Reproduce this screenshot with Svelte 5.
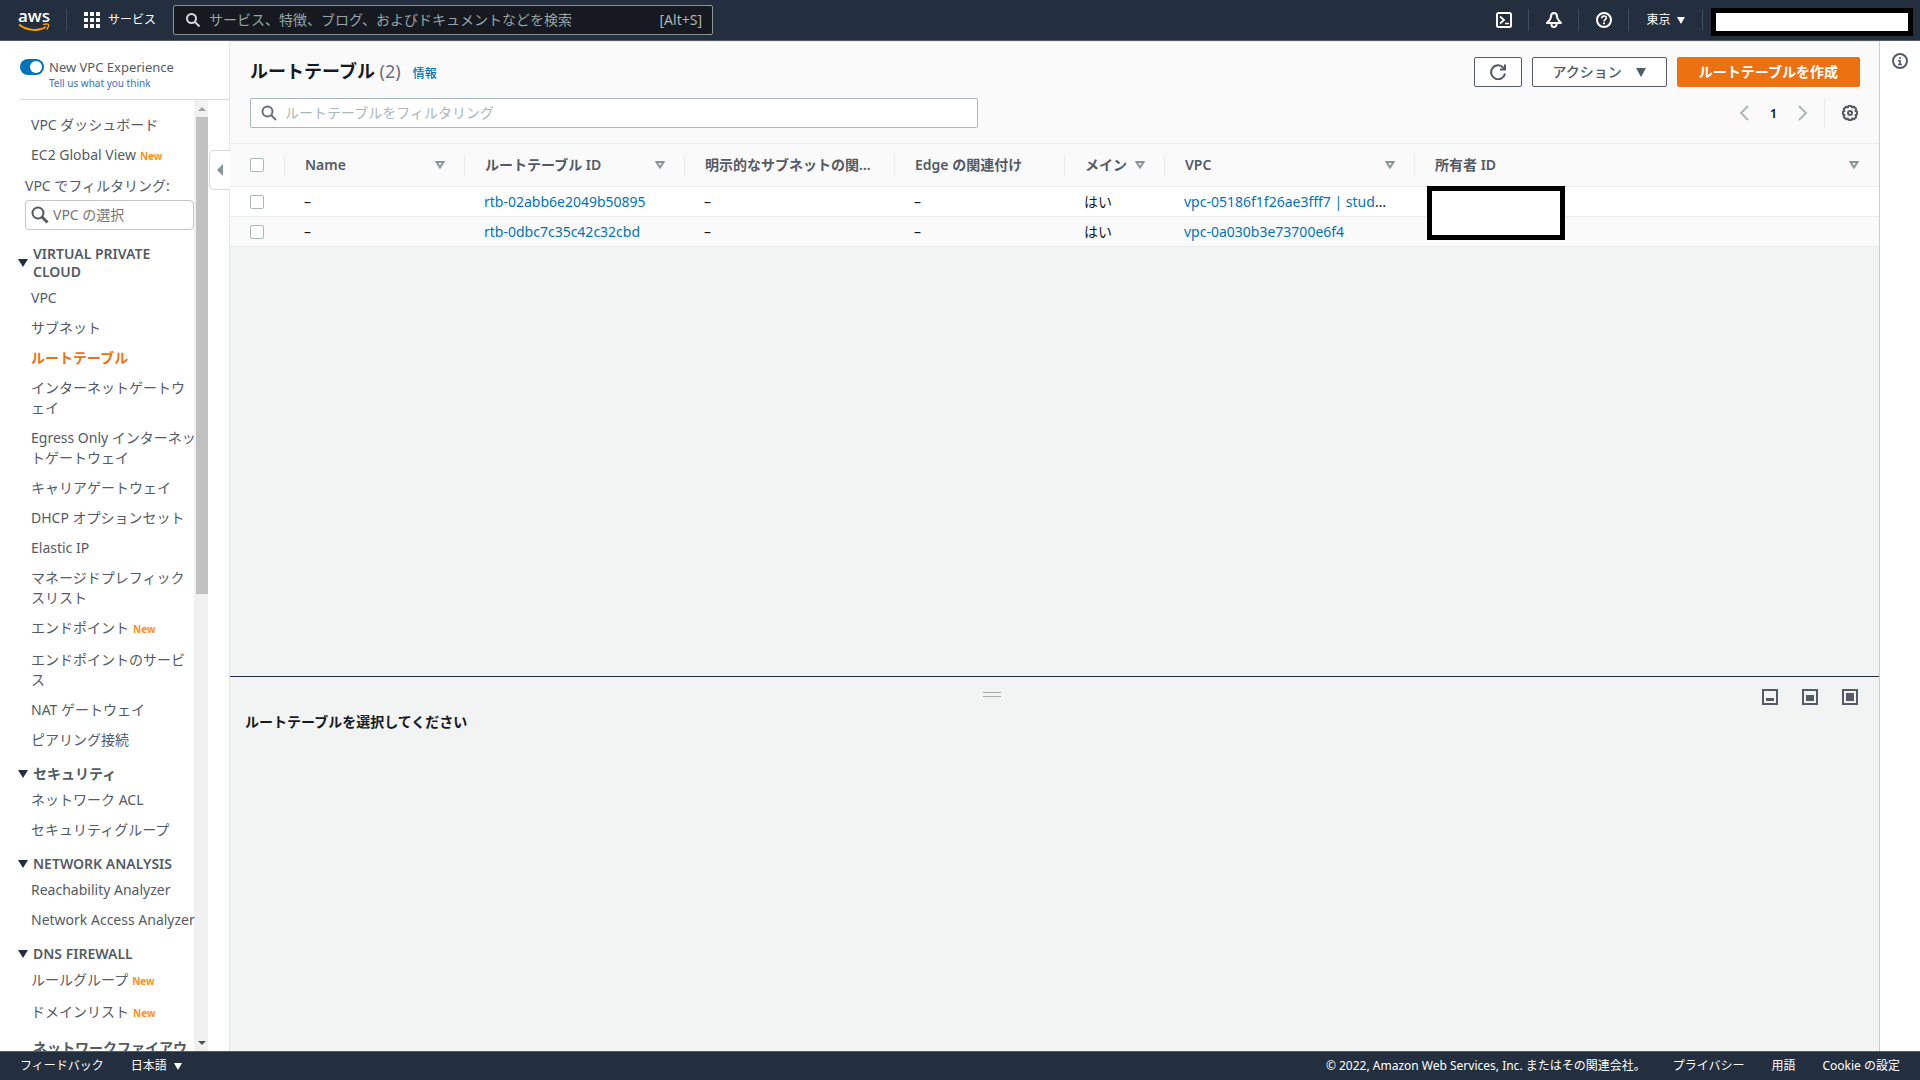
<script>
  const topLinks = [
    { label: 'VPC ダッシュボード' },
    { label: 'EC2 Global View', fresh: true }
  ];

  const sections = [
    {
      title: 'VIRTUAL PRIVATE CLOUD',
      items: [
        { label: 'VPC' },
        { label: 'サブネット' },
        { label: 'ルートテーブル', active: true },
        { label: 'インターネットゲートウェイ' },
        { label: 'Egress Only インターネットゲートウェイ' },
        { label: 'キャリアゲートウェイ' },
        { label: 'DHCP オプションセット' },
        { label: 'Elastic IP' },
        { label: 'マネージドプレフィックスリスト' },
        { label: 'エンドポイント', fresh: true },
        { label: 'エンドポイントのサービス' },
        { label: 'NAT ゲートウェイ' },
        { label: 'ピアリング接続' }
      ]
    },
    { title: 'セキュリティ', items: [{ label: 'ネットワーク ACL' }, { label: 'セキュリティグループ' }] },
    { title: 'NETWORK ANALYSIS', items: [{ label: 'Reachability Analyzer' }, { label: 'Network Access Analyzer' }] },
    { title: 'DNS FIREWALL', items: [{ label: 'ルールグループ', fresh: true }, { label: 'ドメインリスト', fresh: true }] },
    { title: 'ネットワークファイアウォール', items: [] }
  ];

  const columns = [
    { key: 'name', label: 'Name', sortable: true },
    { key: 'id', label: 'ルートテーブル ID', sortable: true },
    { key: 'subnets', label: '明示的なサブネットの関連付け', sortable: false },
    { key: 'edge', label: 'Edge の関連付け', sortable: false },
    { key: 'main', label: 'メイン', sortable: true },
    { key: 'vpc', label: 'VPC', sortable: true },
    { key: 'owner', label: '所有者 ID', sortable: true }
  ];

  const rows = [
    { id: 'rtb-02abb6e2049b50895', vpc: 'vpc-05186f1f26ae3fff7 | student-vpc' },
    { id: 'rtb-0dbc7c35c42c32cbd', vpc: 'vpc-0a030b3e73700e6f4' }
  ];

  const panes = [
    { name: '小', y: 9, h: 3 },
    { name: '中', y: 6, h: 6 },
    { name: '大', y: 4, h: 8 }
  ];
</script>

<div class="app">
  <header class="topbar">
    <a class="logo" href="#home" aria-label="AWS">
      <span>aws</span>
      <svg width="32" height="9" viewBox="0 0 32 9" fill="none" stroke="#ff9900">
        <path d="M1 1.5C9 8 21 8.500 28 4" stroke-width="2" />
        <path d="M25 1.500c3-.8 5.500-.6 5.600.2.2 1-.7 3.500-1.800 5" stroke-width="1.400" />
      </svg>
    </a>
    <span class="rule"></span>
    <button class="services">
      <svg width="16" height="16" viewBox="0 0 16 16" fill="#fff">
        {#each [0, 6, 12] as y}
          {#each [0, 6, 12] as x}
            <rect {x} {y} width="4" height="4" rx=".5" />
          {/each}
        {/each}
      </svg>
      サービス
    </button>
    <label class="search">
      <svg width="16" height="16" viewBox="0 0 16 16" fill="none" stroke="#d5dbdb" stroke-width="2">
        <circle cx="6.500" cy="6.500" r="4.500" /><path d="M10 10l4.500 4.500" />
      </svg>
      <input type="text" placeholder="サービス、特徴、ブログ、およびドキュメントなどを検索" aria-label="検索" />
      <span>[Alt+S]</span>
    </label>
    <nav class="tools">
      <button aria-label="CloudShell">
        <svg width="16" height="16" viewBox="0 0 16 16" fill="none" stroke="#fff" stroke-width="2">
          <rect x="1" y="1" width="14" height="14" rx="1.500" />
          <path d="M4 4.500l4 3.500-4 3.500" stroke-width="1.800" /><path d="M9 11.500h4" stroke-width="1.500" />
        </svg>
      </button>
      <span class="rule"></span>
      <button aria-label="通知">
        <svg width="16" height="16" viewBox="0 0 16 16" fill="none" stroke="#fff" stroke-width="2" stroke-linejoin="round">
          <path d="M8 1C6.200 1 5 2.500 5 4.500c0 2.500-1.500 4-4 6.500h14c-2.500-2.500-4-4-4-6.500C11 2.500 9.800 1 8 1z" />
          <path d="M5.500 11.500v1a2.500 2.500 0 0 0 5 0v-1" />
        </svg>
      </button>
      <span class="rule"></span>
      <button aria-label="ヘルプ">
        <svg width="16" height="16" viewBox="0 0 16 16" fill="none" stroke="#fff" stroke-width="2">
          <circle cx="8" cy="8" r="7" />
          <path d="M5.700 6.200c0-1.300 1-2.200 2.300-2.200s2.300.8 2.300 2c0 1.500-2.300 1.700-2.300 3.500" stroke-width="1.700" />
          <path d="M8 10.500v1.800" />
        </svg>
      </button>
      <span class="rule"></span>
      <button class="region">東京 <i class="caret"></i></button>
      <span class="rule"></span>
      <div class="redacted account"></div>
    </nav>
  </header>

  <div class="body">
    <aside class="sidebar">
      <div class="experience">
        <label class="switch">
          <input type="checkbox" role="switch" checked />
          <span>New VPC Experience</span>
        </label>
        <a href="#feedback">Tell us what you think</a>
      </div>
      <div class="scroller">
        <nav class="menu">
          <ul class="first">
            {#each topLinks as item}
              <li><a href="#top" class:fresh={item.fresh}>{item.label}{#if item.fresh}<b>New</b>{/if}</a></li>
            {/each}
          </ul>
          <label class="filter-label" for="vpc-filter">VPC でフィルタリング:</label>
          <div class="vpc-filter">
            <svg width="18" height="18" viewBox="0 0 18 18" fill="none" stroke="#545b64">
              <circle cx="7" cy="7" r="5.500" stroke-width="2" /><path d="M11 11l5.500 5.500" stroke-width="3" />
            </svg>
            <input id="vpc-filter" type="text" placeholder="VPC の選択" />
          </div>
          {#each sections as section}
            <h2><i class="caret"></i><span>{section.title}</span></h2>
            <ul>
              {#each section.items as item}
                <li>
                  <a href="#item" class:active={item.active} class:fresh={item.fresh}>{item.label}{#if item.fresh}<b>New</b>{/if}</a>
                </li>
              {/each}
            </ul>
          {/each}
        </nav>
        <div class="scrollbar" aria-hidden="true">
          <i class="arrow up"></i>
          <div class="track"><div class="thumb"></div></div>
          <i class="arrow down"></i>
        </div>
      </div>
      <button class="collapse" aria-label="ナビゲーションを閉じる">
        <svg width="6" height="12" viewBox="0 0 6 12" fill="#879596"><path d="M6 0v12L0 6z" /></svg>
      </button>
    </aside>

    <main>
      <section class="upper">
        <div class="heading">
          <div class="line">
            <h1>ルートテーブル <span>(2)</span></h1>
            <a class="info" href="#info">情報</a>
            <div class="actions">
              <button class="btn refresh" aria-label="更新">
                <svg width="16" height="16" viewBox="0 0 16 16" fill="none" stroke="#545b64" stroke-width="2">
                  <path d="M15 9.500A7 7 0 1 1 13.500 3.800L15 5.500" /><path d="M10 5.500h5V.5" />
                </svg>
              </button>
              <button class="btn">アクション <i class="caret"></i></button>
              <button class="btn primary">ルートテーブルを作成</button>
            </div>
          </div>
          <div class="line">
            <label class="table-filter">
              <svg width="16" height="16" viewBox="0 0 16 16" fill="none" stroke="#687078" stroke-width="2">
                <circle cx="6.500" cy="6.500" r="5" /><path d="M10 10l5 5" />
              </svg>
              <input type="text" placeholder="ルートテーブルをフィルタリング" aria-label="ルートテーブルをフィルタリング" />
            </label>
            <div class="pager">
              <button aria-label="前へ">
                <svg width="10" height="16" viewBox="0 0 10 16" fill="none" stroke="#aab7b8" stroke-width="2"><path d="M9 1L2 8l7 7" /></svg>
              </button>
              <button class="page">1</button>
              <button aria-label="次へ">
                <svg width="10" height="16" viewBox="0 0 10 16" fill="none" stroke="#aab7b8" stroke-width="2"><path d="M1 1l7 7-7 7" /></svg>
              </button>
              <span class="divider"></span>
              <button aria-label="設定">
                <svg width="16" height="16" viewBox="0 0 16 16" fill="none" stroke="#545b64" stroke-width="2" stroke-linejoin="round">
                  <path d="M6.500 1h3l.5 1.500 2-.7L14.200 4l-.7 2 1.500.5v3l-1.500.5.7 2-2.200 2.200-2-.7-.5 1.500h-3L6 13.500l-2 .7L1.800 12l.7-2L1 9.500v-3L2.500 6l-.7-2L4 1.800l2 .7z" />
                  <circle cx="8" cy="8" r="2" />
                </svg>
              </button>
            </div>
          </div>
        </div>

        <div class="table-wrap">
          <table>
            <colgroup>
              <col class="c-check" /><col class="c-name" /><col class="c-id" /><col class="c-subnets" />
              <col class="c-edge" /><col class="c-main" /><col class="c-vpc" /><col />
            </colgroup>
            <thead>
              <tr>
                <th class="check"><input type="checkbox" aria-label="すべて選択" /></th>
                {#each columns as column}
                  <th>
                    <div>
                      <span>{column.label}</span>
                      {#if column.sortable}
                        <svg width="10" height="8" viewBox="0 0 10 8" fill="none" stroke="#879596" stroke-width="2"><path d="M1.500 1h7L5 6.500z" /></svg>
                      {/if}
                    </div>
                  </th>
                {/each}
              </tr>
            </thead>
            <tbody>
              {#each rows as row}
                <tr>
                  <td class="check"><input type="checkbox" aria-label={row.id} /></td>
                  <td>–</td>
                  <td><a href="#rtb">{row.id}</a></td>
                  <td>–</td>
                  <td>–</td>
                  <td>はい</td>
                  <td><a href="#vpc">{row.vpc}</a></td>
                  <td></td>
                </tr>
              {/each}
            </tbody>
          </table>
          <div class="redacted owner"></div>
        </div>
      </section>

      <section class="lower">
        <div class="pane-bar">
          <span class="grip"></span>
          <div class="panes">
            {#each panes as pane}
              <button aria-label={pane.name}>
                <svg width="16" height="16" viewBox="0 0 16 16">
                  <rect x="1" y="1" width="14" height="14" fill="none" stroke="#545b64" stroke-width="2" />
                  <rect x="4" y={pane.y} width="8" height={pane.h} fill="#545b64" />
                </svg>
              </button>
            {/each}
          </div>
        </div>
        <h2>ルートテーブルを選択してください</h2>
      </section>
    </main>

    <aside class="rail">
      <button aria-label="情報">
        <svg width="16" height="16" viewBox="0 0 16 16" fill="none" stroke="#545b64" stroke-width="2">
          <circle cx="8" cy="8" r="7" /><path d="M8 4v2M6 7.800h2V11M6 11.500h4" stroke-width="1.600" />
        </svg>
      </button>
    </aside>
  </div>

  <footer>
    <a href="#feedback">フィードバック</a>
    <button>日本語 <i class="caret"></i></button>
    <span class="copyright">© 2022, Amazon Web Services, Inc. またはその関連会社。</span>
    <a href="#privacy">プライバシー</a>
    <a href="#terms">用語</a>
    <a href="#cookies">Cookie の設定</a>
  </footer>
</div>

<style>
  :global(body) { margin: 0; }
  .app {
    display: flex;
    flex-direction: column;
    height: 100vh;
    overflow: hidden;
    font-family: "Noto Sans", "Noto Sans CJK JP", sans-serif;
    font-size: 14px;
    line-height: 20px;
    color: #16191f;
    background: #fff;
  }
  .app *, .app { box-sizing: border-box; }
  button, input { font: inherit; color: inherit; }
  button { padding: 0; border: 0; background: none; display: flex; align-items: center; justify-content: center; cursor: pointer; }
  input { min-width: 0; margin: 0; }
  a { color: #0073bb; text-decoration: none; }
  svg { display: block; flex: none; }
  ul { list-style: none; margin: 0; padding: 0; }
  h1, h2 { margin: 0; }
  input[type="text"] { flex: 1; padding: 0; border: 0; outline: 0; background: none; }

  .caret { flex: none; border: 4px solid transparent; border-top: 7px solid currentColor; border-bottom: 0; }
  .rule { flex: none; width: 1px; height: 22px; background: #414d5c; }
  .redacted { background: #fff; border: 5px solid #000; }

  /* Top bar */
  .topbar {
    flex: none;
    display: flex;
    align-items: center;
    height: 41px;
    padding-left: 18px;
    background: #232f3e;
    border-bottom: 1px solid #545b64;
    color: #fff;
    font-size: 12px;
  }
  .logo { display: flex; flex-direction: column; width: 32px; margin-right: 16px; color: #fff; }
  .logo span { font-family: "Open Sans", sans-serif; font-size: 17px; font-weight: 600; line-height: 14px; text-align: center; }
  .services { gap: 8px; margin: 0 17px; }
  .search {
    display: flex;
    align-items: center;
    gap: 8px;
    flex: 0 1 540px;
    height: 30px;
    padding: 0 10px 0 11px;
    border: 1px solid #879596;
    border-radius: 2px;
    background: #16191f;
    color: #aab7b8;
    font-size: 14px;
  }
  .search input::placeholder { color: #95a5a6; opacity: 1; }
  .tools { display: flex; align-items: center; margin-left: auto; padding-right: 7px; }
  .tools button { width: 49px; height: 40px; }
  .tools .region { width: 73px; gap: 6px; }
  .account { width: 202px; height: 28px; margin: 3px 0 0 8px; }

  /* Sidebar */
  .body { flex: 1; display: flex; min-height: 0; }
  .sidebar { position: relative; flex: none; display: flex; flex-direction: column; width: 230px; border-right: 1px solid #e4e7e7; }
  .experience { flex: none; height: 59px; margin-left: 20px; padding-top: 16px; border-bottom: 1px solid #d5dbdb; }
  .switch { display: flex; align-items: center; gap: 5px; height: 20px; font-size: 13px; line-height: 18px; color: #545b64; }
  .switch input { appearance: none; width: 24px; height: 16px; padding: 2px; border-radius: 8px; background: #0073bb; }
  .switch input::before { content: ""; display: block; width: 12px; height: 12px; margin-left: auto; border-radius: 50%; background: #fff; }
  .experience a { display: block; margin-left: 29px; font-size: 10px; line-height: 12px; color: #3a6fc4; }
  .scroller { flex: 1; display: flex; min-height: 0; overflow: hidden; }
  .menu { position: relative; z-index: 1; flex: 1; min-width: 0; margin-right: -4px; padding-top: 10px; color: #545b64; overflow: hidden; }
  .menu ul { padding-left: 31px; }
  .menu li a { display: block; padding: 5px 0; color: #545b64; line-break: loose; }
  .menu li .fresh { padding-bottom: 6px; }
  .menu li .active { color: #ec7211; font-weight: 600; }
  .menu b { margin-left: 4px; font-size: 10px; font-weight: 700; color: #ff9020; }
  .filter-label { display: block; margin-left: 25px; height: 28px; padding-top: 4px; }
  .vpc-filter { display: flex; align-items: center; gap: 4px; height: 30px; margin: 0 4px 5px 25px; padding-left: 5px; border: 1px solid #c6c6c6; border-radius: 4px; }
  .vpc-filter input::placeholder { color: #757575; opacity: 1; }
  .menu h2 { display: flex; align-items: center; gap: 5px; padding: 10px 8px 2px 18px; font-size: 14px; font-weight: 600; line-height: 18px; }
  .menu h2 .caret { border-width: 8px 5px 0; color: #232f3e; }
  .scrollbar { flex: none; display: flex; flex-direction: column; width: 14px; margin-right: 21px; background: #f1f1f1; }
  .track { flex: 1; padding-left: 2px; }
  .thumb { height: 52%; background: #c1c1c1; }
  .arrow { width: 0; margin: 7px 0 6px 4px; border: 4px solid transparent; }
  .up { border-top: 0; border-bottom-color: #a3a3a3; }
  .down { border-bottom: 0; border-top-color: #505050; }
  .collapse { position: absolute; top: 109px; right: -1px; width: 21px; height: 40px; border: 1px solid #d5dbdb; border-right: 0; border-radius: 5px 0 0 5px; background: #fff; }

  /* Content */
  main { flex: 1; display: flex; flex-direction: column; min-width: 0; background: #f2f3f3; border-right: 1px solid #c8cfcf; }
  .upper { flex: 635 1 0; min-height: 0; border-top: 1px solid #eaeded; }
  .heading { display: flex; flex-direction: column; gap: 11px; padding: 15px 19px 15px 20px; background: #fafafa; border-bottom: 1px solid #eaeded; }
  .line { display: flex; align-items: center; height: 30px; }
  h1 { font-size: 18px; line-height: 24px; padding-bottom: 2px; font-weight: 700; }
  h1 span { font-weight: 400; color: #687078; }
  .info { margin: 4px 0 0 12px; font-size: 12px; font-weight: 500; }
  .actions { display: flex; gap: 10px; margin-left: auto; }
  .btn { height: 30px; padding: 0 20px; gap: 14px; border: 1px solid #545b64; border-radius: 2px; background: #fff; color: #545b64; font-weight: 500; }
  .btn .caret { border-width: 9px 5px 0; }
  .actions .refresh { width: 48px; padding: 0; }
  .actions .primary { border-color: #ec7211; background: #ec7211; color: #fff; font-weight: 700; padding: 0 21px; }
  .table-filter { display: flex; align-items: center; gap: 8px; flex: 0 1 728px; height: 30px; padding: 0 10px; border: 1px solid #aab7b8; border-radius: 2px; background: #fff; }
  .table-filter input::placeholder { color: #aab7b8; opacity: 1; }
  .pager { display: flex; align-items: center; margin-left: auto; padding-right: 2px; }
  .page { width: 49px; height: 30px; font-size: 13px; font-weight: 600; }
  .divider { width: 1px; height: 30px; margin: 0 17px 0 16px; background: #eaeded; }

  .table-wrap { position: relative; }
  table { width: 100%; table-layout: fixed; border-collapse: separate; border-spacing: 0; background: #fff; }
  .c-check { width: 55px; }
  .c-name { width: 180px; }
  .c-id { width: 220px; }
  .c-subnets { width: 210px; }
  .c-edge { width: 170px; }
  .c-main { width: 100px; }
  .c-vpc { width: 250px; }
  th, td { padding: 0 20px; text-align: left; border-bottom: 1px solid #eaeded; overflow: hidden; text-overflow: ellipsis; white-space: nowrap; }
  th { height: 43px; background: #fafafa; color: #545b64; font-weight: 600; }
  th:not(:last-child) { background: linear-gradient(#eaeded, #eaeded) right center / 1px 21px no-repeat #fafafa; }
  th div { display: flex; align-items: center; justify-content: space-between; gap: 4px; }
  th span { overflow: hidden; text-overflow: ellipsis; }
  td { height: 30px; padding: 0 26px 0 19px; }
  tr:nth-child(2) td { background: #fafafa; }
  .check { padding: 0 20px; }
  .check input { appearance: none; display: block; width: 14px; height: 14px; border: 1px solid #aab7b8; border-radius: 2px; background: #fff; }
  .owner { position: absolute; left: 1197px; top: 42px; width: 138px; height: 54px; }

  .lower { flex: 375 1 0; min-height: 0; border-top: 1px solid #232f3e; }
  .pane-bar { display: grid; grid-template-columns: 1fr 104px; padding: 12px 21px 0 0; height: 34px; }
  .grip { justify-self: center; width: 18px; height: 5px; margin-top: 3px; border: 1px solid #aaa; border-width: 1px 0; }
  .panes { display: flex; gap: 24px; justify-content: flex-end; align-items: start; }
  .lower h2 { padding-left: 15px; font-size: 14px; font-weight: 600; line-height: 22px; }

  .rail { flex: none; width: 40px; padding: 12px; }

  footer { flex: none; display: flex; align-items: center; height: 29px; padding: 0 20px; border-top: 1px solid #545b64; background: #232f3e; color: #fff; font-size: 12px; gap: 27px; }
  footer a { color: #fff; }
  footer button { gap: 7px; }
  .copyright { margin-left: auto; }
</style>
